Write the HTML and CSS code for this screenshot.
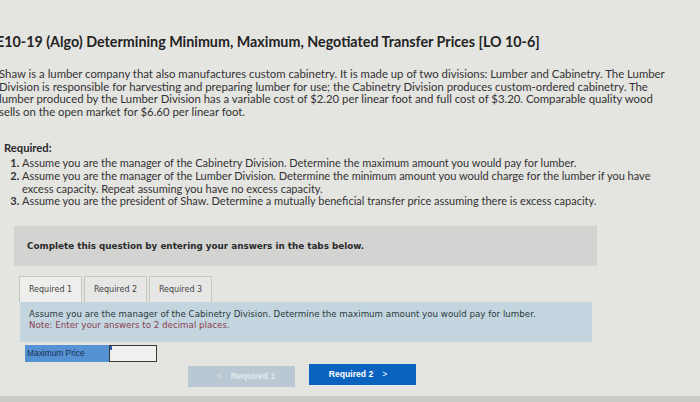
FILE: index.html
```html
<!DOCTYPE html>
<html>
<head>
<meta charset="utf-8">
<link rel="stylesheet" href="styles.css">
</head>
<body>
<div class="page">
  <h1 class="title">E10-19 (Algo) Determining Minimum, Maximum, Negotiated Transfer Prices [LO 10-6]</h1>
  <p class="intro">Shaw is a lumber company that also manufactures custom cabinetry. It is made up of two divisions: Lumber and Cabinetry. The Lumber<br>Division is responsible for harvesting and preparing lumber for use; the Cabinetry Division produces custom-ordered cabinetry. The<br>lumber produced by the Lumber Division has a variable cost of $2.20 per linear foot and full cost of $3.20. Comparable quality wood<br>sells on the open market for $6.60 per linear foot.</p>
  <div class="required">
    <h2 class="req-head">Required:</h2>
    <ol class="req-list">
      <li>Assume you are the manager of the Cabinetry Division. Determine the maximum amount you would pay for lumber.</li>
      <li>Assume you are the manager of the Lumber Division. Determine the minimum amount you would charge for the lumber if you have<br>excess capacity. Repeat assuming you have no excess capacity.</li>
      <li>Assume you are the president of Shaw. Determine a mutually beneficial transfer price assuming there is excess capacity.</li>
    </ol>
  </div>
  <div class="complete">Complete this question by entering your answers in the tabs below.</div>
  <div class="tabs">
    <div class="tab active">Required 1</div>
    <div class="tab">Required 2</div>
    <div class="tab">Required 3</div>
  </div>
  <div class="panel">
    <div class="panel-text">Assume you are the manager of the Cabinetry Division. Determine the maximum amount you would pay for lumber.</div>
    <div class="panel-note">Note: Enter your answers to 2 decimal places.</div>
  </div>
  <div class="answer">
    <div class="answer-label">Maximum Price</div>
    <div class="answer-input"><span class="caret"></span></div>
  </div>
  <div class="nav">
    <div class="btn prev"><span class="chev">&lt;</span>Required 1</div>
    <div class="btn next">Required 2<span class="chev">&gt;</span></div>
  </div>
  <div class="bottom-strip"></div>
</div>
</body>
</html>
```

FILE: styles.css
```css
html, body {
  margin: 0;
  padding: 0;
}
body {
  background: #e4e4e1;
  width: 700px;
  height: 402px;
  overflow: hidden;
  color: #2e2e2e;
  font-family: Lato, "Open Sans", sans-serif;
}
.page {
  display: flex;
  flex-direction: column;
  height: 402px;
}
.page > * {
  flex-shrink: 0;
}
.title {
  margin: 32px 0 0 -4px;
  font-size: 14.3px;
  font-weight: 700;
  line-height: 20px;
  color: #232323;
  white-space: nowrap;
}
.intro {
  margin: 16px 0 0 -1px;
  font-size: 11.35px;
  line-height: 12.6px;
  color: #333;
  white-space: nowrap;
}
.required {
  margin: 23px 0 0 4px;
}
.req-head {
  margin: 0;
  font-size: 11.2px;
  font-weight: 700;
  line-height: 13px;
  color: #2a2a2a;
}
.req-list {
  margin: 3px 0 0 0;
  padding-left: 18px;
  font-size: 11px;
  line-height: 12.6px;
  color: #333;
  white-space: nowrap;
}
.req-list li::marker {
  font-weight: 700;
}
.complete {
  margin: 18px 0 0 14px;
  width: 583px;
  height: 40px;
  background: #d3d3d1;
  display: flex;
  align-items: center;
  padding-left: 13px;
  box-sizing: border-box;
  font-family: "DejaVu Sans", Verdana, sans-serif;
  font-weight: 700;
  font-size: 8.8px;
  color: #2a2a2a;
}
.tabs {
  margin: 10px 0 0 19px;
  display: flex;
  gap: 2px;
}
.tab {
  width: 63px;
  height: 26px;
  box-sizing: border-box;
  border: 1px solid #c6c6c4;
  border-bottom: none;
  background: #e6e6e4;
  display: flex;
  align-items: center;
  justify-content: center;
  font-family: "DejaVu Sans", Verdana, sans-serif;
  font-size: 8px;
  color: #444;
}
.tab.active {
  background: #eeeeec;
}
.panel {
  margin: 0 0 0 20px;
  width: 572px;
  background: #c3d6df;
  padding: 7px 9px 10px;
  box-sizing: border-box;
  font-family: "DejaVu Sans", Verdana, sans-serif;
  font-size: 8.7px;
  line-height: 11.5px;
}
.panel-text {
  color: #2b363c;
}
.panel-note {
  color: #8a3e52;
}
.answer {
  margin: 3px 0 0 25px;
  display: flex;
  height: 17px;
}
.answer-label {
  width: 84px;
  background: #5592d4;
  font-family: "Liberation Sans", Arial, sans-serif;
  font-size: 8.4px;
  color: #1d2f52;
  display: flex;
  align-items: center;
  padding-left: 2px;
  box-sizing: border-box;
}
.answer-input {
  width: 48px;
  background: #f0f0ee;
  border: 1px solid #3a3a3a;
  box-sizing: border-box;
  position: relative;
}
.caret {
  position: absolute;
  left: 0;
  top: 0;
  width: 2px;
  height: 4px;
  background: #2a5bb0;
}
.nav {
  margin: 2px 0 0 188px;
  display: flex;
  gap: 14px;
  align-items: flex-start;
}
.btn {
  width: 107px;
  height: 21px;
  display: flex;
  align-items: center;
  justify-content: center;
  font-family: "Liberation Sans", Arial, sans-serif;
  font-weight: 700;
  font-size: 8.6px;
  box-sizing: border-box;
}
.btn .chev {
  font-weight: 400;
  margin: 0 9px;
}
.prev {
  background: #b9c8d3;
  color: #e2e9ee;
  margin-top: 2px;
}
.next {
  background: #0a63bf;
  color: #ffffff;
}
.bottom-strip {
  margin-top: auto;
  height: 6px;
  background: #cbcbc8;
}
```
